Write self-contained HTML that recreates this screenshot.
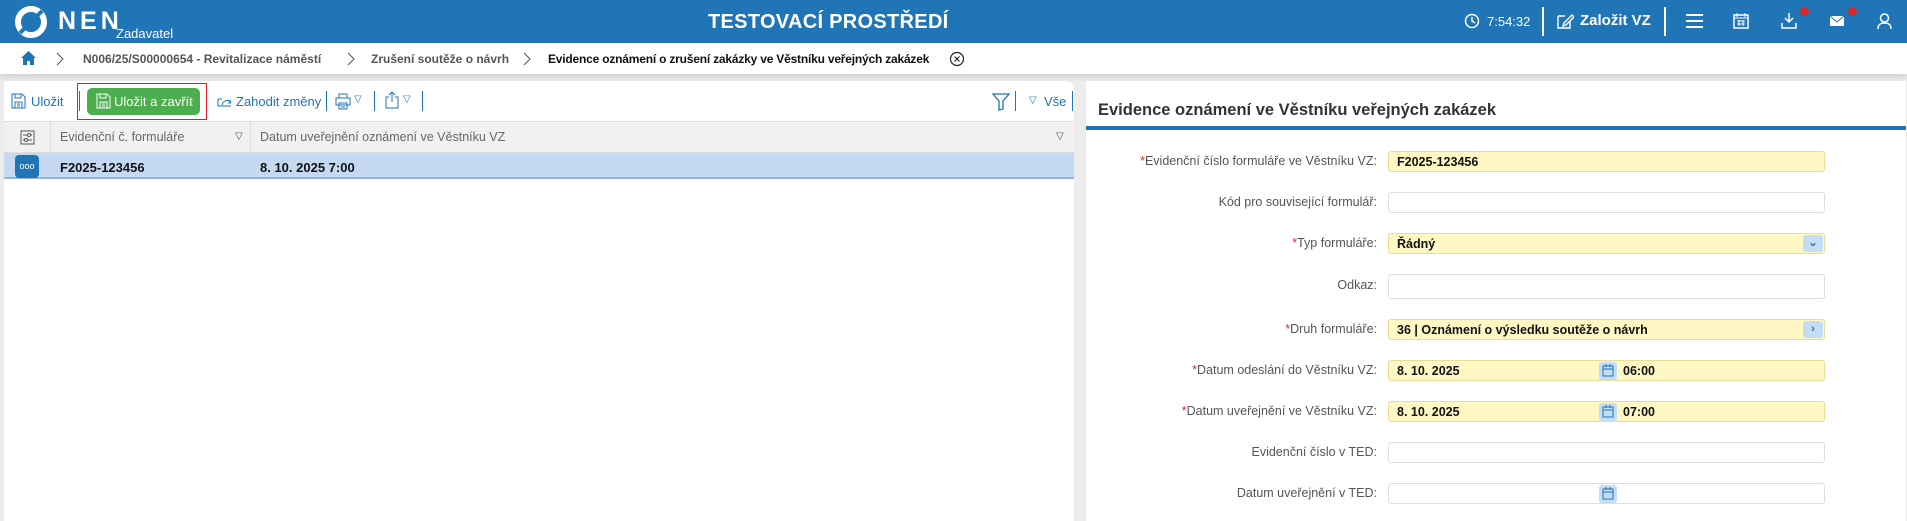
<!DOCTYPE html>
<html><head><meta charset="utf-8"><style>
*{box-sizing:border-box;margin:0;padding:0}
body{width:1907px;height:519px;overflow:hidden;background:#ececec;font-family:"Liberation Sans",sans-serif;position:relative;font-size:13px;color:#333}
.a{position:absolute}
.hdr{left:0;top:0;width:1907px;height:43px;background:#1f75b5;color:#fff}
.bc{left:0;top:43px;width:1907px;height:31px;background:#fff;box-shadow:0 3px 6px rgba(0,0,0,.12)}
.bc span{position:absolute;top:9px;font-size:12px;font-weight:bold;color:#555;white-space:nowrap}
.lp{left:4px;top:81px;width:1070px;height:440px;background:#fff;border-radius:0 8px 0 0}
.rp{left:1086px;top:81px;width:820px;height:440px;background:#fff}
.lbl{position:absolute;right:529px;font-size:12.5px;color:#555;white-space:nowrap;text-align:right}
.lbl b{color:#d0332b;font-weight:normal}
.in{position:absolute;left:302px;width:437px;height:21px;border:1px solid #ddd;border-radius:3px;background:#fff;font-size:12.5px;font-weight:bold;color:#111;padding:3px 8px}
.in.y{background:#fff8c4;border-color:#e8dc9a}
.cal{position:absolute;left:210px;top:1px;width:18px;height:18px;background:#c5dcf5;border-radius:3px}
.btn{position:absolute;right:1px;top:1px;width:20px;height:17px;background:#c5dcf5;border-radius:3px;color:#1f75b5;font-size:11px;text-align:center;line-height:17px}
.tb{color:#1f75b5;font-size:13px;position:absolute;white-space:nowrap}
.sep{position:absolute;width:1px;height:20px;background:#1f75b5}
</style></head><body>
<div class="a hdr">
 <svg class="a" style="left:12px;top:5px" width="38" height="34" viewBox="0 0 38 34"><circle cx="19" cy="17" r="13" fill="none" stroke="#fff" stroke-width="6"/><path d="M8 28 L30 6" stroke="#1f75b5" stroke-width="4"/></svg>
 <div class="a" style="left:58px;top:7px;font-size:25px;font-weight:bold;letter-spacing:4px">NEN</div>
 <div class="a" style="left:116px;top:26px;font-size:13px">Zadavatel</div>
 <div class="a" style="left:708px;top:11px;font-size:20px;font-weight:bold;letter-spacing:.3px">TESTOVACÍ PROSTŘEDÍ</div>
 <svg class="a" style="left:1464px;top:13px" width="16" height="16"><circle cx="8" cy="8" r="6.5" fill="none" stroke="#fff" stroke-width="1.5"/><path d="M8 4v4l3 2" stroke="#fff" fill="none" stroke-width="1.5"/></svg>
 <div class="a" style="left:1487px;top:14px;font-size:13px">7:54:32</div>
 <div class="a" style="left:1542px;top:7px;width:2px;height:29px;background:#fff"></div>
 <svg class="a" style="left:1556px;top:12px" width="18" height="18"><path d="M2 4h7M2 4v12h12V9M8 11l8-8 2 2-8 8-3 1z" stroke="#fff" fill="none" stroke-width="1.4"/></svg>
 <div class="a" style="left:1580px;top:12px;font-size:15px;font-weight:bold">Založit VZ</div>
 <div class="a" style="left:1664px;top:7px;width:2px;height:29px;background:#fff"></div>
 <div class="a" style="left:1686px;top:14px;width:17px;height:2px;background:#fff;box-shadow:0 6px 0 #fff,0 12px 0 #fff"></div>
 <svg class="a" style="left:1733px;top:12px" width="16" height="17"><rect x="1" y="3" width="14" height="13" fill="none" stroke="#fff" stroke-width="1.5"/><path d="M1 6h14M4 1v4M12 1v4M4 9h8M4 12h8M6 8v6M10 8v6" stroke="#fff"/></svg>
 <svg class="a" style="left:1781px;top:12px" width="16" height="17"><path d="M8 1v9M4 6l4 4 4-4M1 11v5h14v-5" stroke="#fff" fill="none" stroke-width="1.5"/></svg>
 <div class="a" style="left:1800px;top:7px;width:9px;height:9px;border-radius:50%;background:#d02a2a"></div>
 <svg class="a" style="left:1829px;top:15px" width="16" height="12"><rect x="1" y="1" width="14" height="10" fill="#fff"/><path d="M1 1l7 6 7-6" stroke="#1f75b5" fill="none"/></svg>
 <div class="a" style="left:1848px;top:7px;width:9px;height:9px;border-radius:50%;background:#d02a2a"></div>
 <svg class="a" style="left:1877px;top:12px" width="15" height="18"><circle cx="7.5" cy="6" r="4" fill="none" stroke="#fff" stroke-width="1.5"/><path d="M1 17c0-5 3-6 6.5-6s6.5 1 6.5 6" stroke="#fff" fill="none" stroke-width="1.5"/></svg>
</div>
<div class="a bc">
 <svg class="a" style="left:20px;top:7px" width="17" height="16"><path d="M8.5 1L1 8h2v7h4v-4h3v4h4V8h2z" fill="#1f75b5"/></svg>
 <svg class="a" style="left:56px;top:9px" width="8" height="14"><path d="M1 1l6 6-6 6" stroke="#555" fill="none"/></svg>
 <span style="left:83px">N006/25/S00000654 - Revitalizace náměstí</span>
 <svg class="a" style="left:347px;top:9px" width="8" height="14"><path d="M1 1l6 6-6 6" stroke="#555" fill="none"/></svg>
 <span style="left:371px">Zrušení soutěže o návrh</span>
 <svg class="a" style="left:523px;top:9px" width="8" height="14"><path d="M1 1l6 6-6 6" stroke="#555" fill="none"/></svg>
 <span style="left:548px;color:#111;letter-spacing:-.2px">Evidence oznámení o zrušení zakázky ve Věstníku veřejných zakázek</span>
 <svg class="a" style="left:949px;top:8px" width="16" height="16"><circle cx="8" cy="8" r="6.5" fill="none" stroke="#222" stroke-width="1.2"/><path d="M5.5 5.5l5 5M10.5 5.5l-5 5" stroke="#222" stroke-width="1.2"/></svg>
</div>
<div class="a lp">
 <svg class="a" style="left:7px;top:12px" width="15" height="16"><path d="M1 1h10l3 3v11H1z M4 1v4h6V1 M4 9h7v6H4z M6 11h3M6 13h3" stroke="#1f75b5" fill="none"/></svg>
 <div class="tb" style="left:27px;top:13px">Uložit</div>
 <div class="sep" style="left:75px;top:10px"></div>
 <div class="a" style="left:73px;top:2px;width:130px;height:37px;border:1px solid #e02020"></div>
 <div class="a" style="left:83px;top:7px;width:113px;height:27px;background:#4cae4f;border-radius:5px;color:#fff;font-size:13px;padding:6px 0 0 27px">Uložit a zavřít</div>
 <svg class="a" style="left:92px;top:12px" width="15" height="16"><path d="M1 1h10l3 3v11H1z M4 1v4h6V1 M4 9h7v6H4z M6 11h3M6 13h3" stroke="#fff" fill="none"/></svg>
 <svg class="a" style="left:213px;top:15px" width="16" height="12"><path d="M1 3h4M1 3v7h13M5 9c1-5 7-6 9-2M14 7l-1-3M14 7l-3 0" stroke="#1f75b5" fill="none"/></svg>
 <div class="tb" style="left:232px;top:13px">Zahodit změny</div>
 <div class="sep" style="left:322px;top:10px"></div>
 <svg class="a" style="left:331px;top:12px" width="16" height="17"><path d="M4 1h8v4H4zM1 5h14v7H1zM4 10h8v6H4zM6 12h4M6 14h4" stroke="#1f75b5" fill="none"/></svg>
 <div class="tb" style="left:350px;top:13px;font-size:10px">▽</div>
 <div class="sep" style="left:370px;top:10px"></div>
 <svg class="a" style="left:380px;top:10px" width="16" height="18"><path d="M5 6H2v11h12V6h-3M8 1v10M5 4l3-3 3 3" stroke="#1f75b5" fill="none"/></svg>
 <div class="tb" style="left:399px;top:13px;font-size:10px">▽</div>
 <div class="sep" style="left:418px;top:10px"></div>
 <svg class="a" style="left:988px;top:12px" width="18" height="18"><path d="M1 1h16l-6 7v8l-4 1V8z" stroke="#1f75b5" fill="none" stroke-width="1.3"/></svg>
 <div class="sep" style="left:1011px;top:10px"></div>
 <div class="tb" style="left:1025px;top:14px;font-size:10px">▽</div>
 <div class="tb" style="left:1040px;top:13px">Vše</div>
 <div class="sep" style="left:1068px;top:10px"></div>
 <div class="a" style="left:0;top:40px;width:1070px;height:32px;background:#f1f1f1;border-top:1px solid #ddd;border-bottom:1px solid #ddd"></div>
 <div class="a" style="left:46px;top:40px;width:1px;height:32px;background:#ddd"></div>
 <div class="a" style="left:246px;top:40px;width:1px;height:32px;background:#ddd"></div>
 <svg class="a" style="left:16px;top:49px" width="15" height="15"><rect x="1" y="1" width="13" height="13" fill="none" stroke="#555"/><path d="M3 5h9M3 10h9" stroke="#555"/><circle cx="9" cy="5" r="1.5" fill="#fff" stroke="#555"/><circle cx="6" cy="10" r="1.5" fill="#fff" stroke="#555"/></svg>
 <div class="a" style="left:56px;top:49px;color:#666;font-size:12.5px">Evidenční č. formuláře</div>
 <div class="a" style="left:231px;top:50px;color:#555;font-size:10px">▽</div>
 <div class="a" style="left:256px;top:49px;color:#666;font-size:12.5px">Datum uveřejnění oznámení ve Věstníku VZ</div>
 <div class="a" style="left:1052px;top:50px;color:#555;font-size:10px">▽</div>
 <div class="a" style="left:0;top:72px;width:1070px;height:26px;background:#c5daf2;border-bottom:2px solid #8fb5e0"></div>
 <div class="a" style="left:11px;top:74px;width:24px;height:23px;background:#1f75b5;border-radius:4px;color:#fff;font-size:9px;text-align:center;line-height:22px">ooo</div>
 <div class="a" style="left:56px;top:79px;font-weight:bold;color:#111">F2025-123456</div>
 <div class="a" style="left:256px;top:79px;font-weight:bold;color:#111">8. 10. 2025 7:00</div>
</div>
<div class="a rp">
 <div class="a" style="left:12px;top:20px;font-size:16.5px;font-weight:bold;color:#333">Evidence oznámení ve Věstníku veřejných zakázek</div>
 <div class="a" style="left:0;top:45px;width:820px;height:4px;background:#1f75b5"></div>
 <div class="lbl" style="top:73px"><b>*</b>Evidenční číslo formuláře ve Věstníku VZ:</div>
 <div class="in y" style="top:70px">F2025-123456</div>
 <div class="lbl" style="top:114px">Kód pro související formulář:</div>
 <div class="in" style="top:111px"></div>
 <div class="lbl" style="top:155px"><b>*</b>Typ formuláře:</div>
 <div class="in y" style="top:152px">Řádný<div class="btn">⌄</div></div>
 <div class="lbl" style="top:197px">Odkaz:</div>
 <div class="in" style="top:193px;height:25px"></div>
 <div class="lbl" style="top:241px"><b>*</b>Druh formuláře:</div>
 <div class="in y" style="top:238px">36 | Oznámení o výsledku soutěže o návrh<div class="btn">›</div></div>
 <div class="lbl" style="top:282px"><b>*</b>Datum odeslání do Věstníku VZ:</div>
 <div class="in y" style="top:279px">8. 10. 2025<div class="cal"><svg width="18" height="18"><rect x="4" y="4" width="10" height="10" fill="none" stroke="#1f75b5"/><path d="M4 7h10M7 2v3M11 2v3" stroke="#1f75b5"/></svg></div><span class="a" style="left:234px;top:3px">06:00</span></div>
 <div class="lbl" style="top:323px"><b>*</b>Datum uveřejnění ve Věstníku VZ:</div>
 <div class="in y" style="top:320px">8. 10. 2025<div class="cal"><svg width="18" height="18"><rect x="4" y="4" width="10" height="10" fill="none" stroke="#1f75b5"/><path d="M4 7h10M7 2v3M11 2v3" stroke="#1f75b5"/></svg></div><span class="a" style="left:234px;top:3px">07:00</span></div>
 <div class="lbl" style="top:364px">Evidenční číslo v TED:</div>
 <div class="in" style="top:361px"></div>
 <div class="lbl" style="top:405px">Datum uveřejnění v TED:</div>
 <div class="in" style="top:402px"><div class="cal"><svg width="18" height="18"><rect x="4" y="4" width="10" height="10" fill="none" stroke="#1f75b5"/><path d="M4 7h10M7 2v3M11 2v3" stroke="#1f75b5"/></svg></div></div>
</div>
</body></html>
